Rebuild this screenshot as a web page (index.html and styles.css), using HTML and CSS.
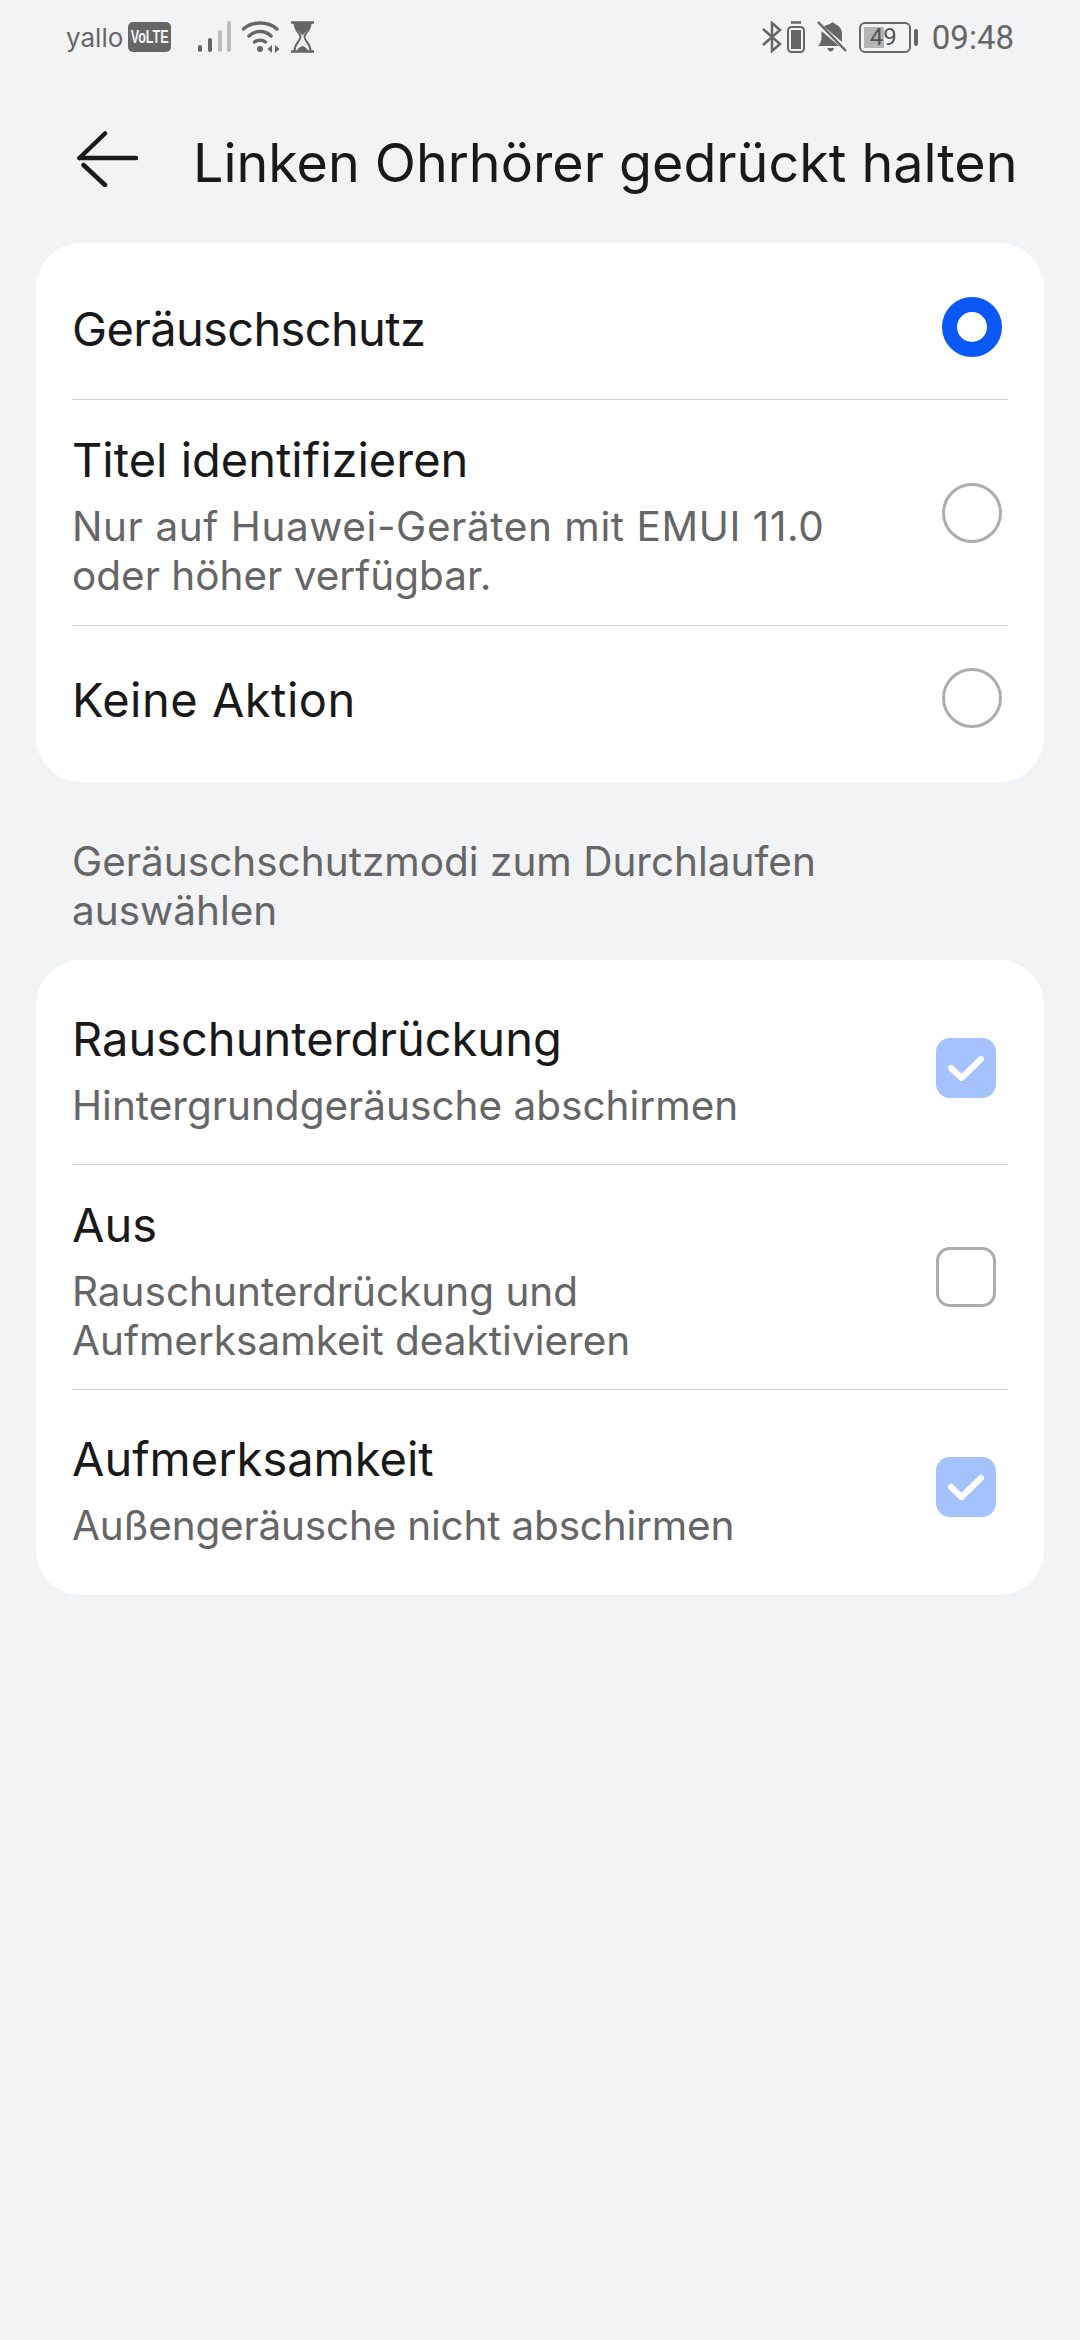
FILE: index.html
```html
<!DOCTYPE html>
<html lang="de">

<head>
    <title>Linken Ohrhörer gedrückt halten</title>
    <meta name="viewport" content="width=device-width, initial-scale=1.0">
    <link rel="stylesheet" href="styles.css">
</head>

<body>
    <div class="status-bar">
        <div class="status-left">
            <span class="carrier">yallo</span>
            <span class="volte"><span class="volte-text">VoLTE</span></span>
            <svg class="signal" width="34" height="32" viewBox="0 0 34 32">
                <rect x="0" y="24" width="4" height="7" rx="2" fill="#666"/>
                <rect x="10" y="17" width="4" height="14" rx="2" fill="#666"/>
                <rect x="20" y="9" width="4" height="22" rx="2" fill="#bbb"/>
                <rect x="29" y="0" width="4" height="31" rx="2" fill="#bbb"/>
            </svg>
            <svg class="wifi" width="38" height="32" viewBox="0 0 38 32" fill="none" stroke="#666" stroke-width="3.500" stroke-linecap="round">
                <path d="M1.500 8 C10 0 26 0 35 8"/>
                <path d="M7 15 C13 9 23 9 29 15"/>
                <path d="M12.500 21 C15.500 18.500 20.500 18.500 23.500 21"/>
                <circle cx="18" cy="28" r="3" fill="#666" stroke="none"/>
                <path d="M30 24 L25.500 28 L30 32 Z M33 24 L37.500 28 L33 32 Z" fill="#666" stroke="none"/>
            </svg>
            <svg class="hourglass" width="23" height="32" viewBox="0 0 23 32" fill="none" stroke="#666" stroke-width="2">
                <path d="M0 1.500 H23 M0 30.500 H23" stroke-width="2.500"/>
                <path d="M3.500 2 C3.500 10 9.500 12 9.500 16 C9.500 20 3.500 22 3.500 30 M19.500 2 C19.500 10 13.500 12 13.500 16 C13.500 20 19.500 22 19.500 30"/>
                <path d="M4 2 H19 C18.500 9 14 11 11.500 14.500 C9 11 4.500 9 4 2 Z M6 30 C7 27 9 26 11.500 25 C14 26 16 27 17 30 Z" fill="#666" stroke="none"/>
            </svg>
        </div>
        <div class="status-right">
            <svg class="bluetooth" width="20" height="32" viewBox="0 0 20 32" fill="none" stroke="#666" stroke-width="2.500">
                <path d="M1 8 L18 23 L10 30 V2 L18 9 L1 24"/>
            </svg>
            <svg class="watch" width="18" height="32" viewBox="0 0 18 32" fill="none" stroke="#666" stroke-width="2">
                <path d="M4 1.500 H14" stroke-width="2.500"/>
                <rect x="1" y="6" width="16" height="25" rx="3.500"/>
                <rect x="4" y="9" width="10" height="19" fill="#666" stroke="none"/>
            </svg>
            <svg class="bell" width="30" height="32" viewBox="0 0 30 32">
                <path d="M13 3 C14 1 17 1 18 3 C22 4.500 25 8 25 13 V21 L7 5.500 C8.500 4.500 11 3.500 13 3 Z M4.500 10 L22 25 H1 C3.500 22 4.500 20 4.500 16 Z" fill="#666"/>
                <path d="M10.500 27 H17 C16.500 31.500 11 31.500 10.500 27 Z" fill="#666"/>
                <path d="M1 1 L29 30" stroke="#666" stroke-width="2.500"/>
            </svg>
            <div class="battery">
                <div class="battery-body">
                    <div class="battery-fill"></div>
                    <span class="battery-num">49</span>
                </div>
                <div class="battery-cap"></div>
            </div>
            <span class="clock">09:48</span>
        </div>
    </div>

    <div class="header">
        <svg class="back" width="62" height="56" viewBox="0 0 62 56" fill="none" stroke="#1a1a1a" stroke-width="4.500" stroke-linecap="round" stroke-linejoin="round">
            <path d="M2.500 27 H59"/>
            <path d="M28 2.500 L2.500 27"/>
            <path d="M6.500 34 L28 54"/>
        </svg>
        <h1>Linken Ohrhörer gedrückt halten</h1>
    </div>

    <div class="card">
        <div class="row row-single">
            <div class="row-text">
                <div class="row-title title-tight">Geräuschschutz</div>
            </div>
            <span class="radio radio-on"></span>
        </div>
        <div class="row row-double">
            <div class="row-text">
                <div class="row-title">Titel identifizieren</div>
                <div class="row-sub"><span class="sub-wide">Nur auf Huawei-Geräten mit EMUI 11.0</span><br>oder höher verfügbar.</div>
            </div>
            <span class="radio"></span>
        </div>
        <div class="row row-single row-last">
            <div class="row-text">
                <div class="row-title title-wide">Keine Aktion</div>
            </div>
            <span class="radio"></span>
        </div>
    </div>

    <p class="section-label">Geräuschschutzmodi zum Durchlaufen<br>auswählen</p>

    <div class="card">
        <div class="row row-sub-one">
            <div class="row-text">
                <div class="row-title">Rauschunterdrückung</div>
                <div class="row-sub">Hintergrundgeräusche abschirmen</div>
            </div>
            <span class="check check-on">
                <svg width="60" height="60" viewBox="0 0 60 60" fill="none" stroke="#fff" stroke-width="6" stroke-linecap="round" stroke-linejoin="round">
                    <path d="M15 30 L25.500 40 L45 21"/>
                </svg>
            </span>
        </div>
        <div class="row row-double row-mid">
            <div class="row-text">
                <div class="row-title">Aus</div>
                <div class="row-sub">Rauschunterdrückung und<br>Aufmerksamkeit deaktivieren</div>
            </div>
            <span class="check"></span>
        </div>
        <div class="row row-sub-one">
            <div class="row-text text-low">
                <div class="row-title">Aufmerksamkeit</div>
                <div class="row-sub sub-tight">Außengeräusche nicht abschirmen</div>
            </div>
            <span class="check check-on">
                <svg width="60" height="60" viewBox="0 0 60 60" fill="none" stroke="#fff" stroke-width="6" stroke-linecap="round" stroke-linejoin="round">
                    <path d="M15 30 L25.500 40 L45 21"/>
                </svg>
            </span>
        </div>
    </div>
</body>

</html>
```

FILE: styles.css
```css
* {
    box-sizing: border-box;
}

body {
    margin: 0;
    height: 2340px;
    overflow: hidden;
    background-color: #f1f3f5;
    font-family: Inter, "Noto Sans", Arial, sans-serif;
    color: #191919;
}

.status-bar {
    height: 74px;
    padding: 0 66px;
    display: flex;
    justify-content: space-between;
    align-items: center;
    color: #666;
}

.status-left,
.status-right {
    display: flex;
    align-items: center;
}

.carrier {
    width: 62px;
    font-size: 26px;
}

.volte {
    width: 43px;
    height: 30px;
    margin-right: 27px;
    display: flex;
    align-items: center;
    justify-content: center;
    background-color: #666;
    color: #f1f3f5;
    font-family: "Liberation Sans", Arial, sans-serif;
    font-size: 19px;
    font-weight: 700;
    border-radius: 5px;
    white-space: nowrap;
}

.volte-text {
    flex-shrink: 0;
    transform: scaleX(0.66);
}

.signal {
    margin-right: 10px;
}

.wifi {
    margin-right: 11px;
}

.bluetooth {
    margin-right: 5px;
}

.watch {
    margin-right: 12px;
}

.bell {
    margin-right: 12px;
}

.battery {
    display: flex;
    align-items: center;
    margin-right: 14px;
}

.battery-body {
    position: relative;
    width: 52px;
    height: 31px;
    border: 2.500px solid #666;
    border-radius: 6px;
}

.battery-fill {
    position: absolute;
    left: 3px;
    top: 3px;
    bottom: 3px;
    width: 20px;
    background-color: #b5b5b5;
}

.battery-num {
    position: absolute;
    left: 9px;
    top: 0;
    font-family: Roboto, sans-serif;
    font-size: 24px;
    line-height: 26px;
    color: #555;
}

.battery-cap {
    width: 4px;
    height: 17px;
    margin-left: 3px;
    background-color: #666;
    border-radius: 2px;
}

.clock {
    font-family: Roboto, sans-serif;
    font-size: 33px;
}

.header {
    height: 169px;
    padding: 8px 0 0 77px;
    display: flex;
    align-items: center;
}

.back {
    margin-right: 54px;
    margin-top: -7px;
}

h1 {
    margin: 0;
    font-size: 53.800px;
    font-weight: 400;
    white-space: nowrap;
}

.card {
    margin: 0 36px;
    padding: 12px 36px;
    background-color: #fff;
    border-radius: 45px;
}

.row {
    display: flex;
    align-items: center;
    justify-content: space-between;
    border-bottom: 1.500px solid #d2d2d2;
}

.row:last-child {
    border-bottom: none;
}

.row-single {
    height: 145px;
}

.row-last {
    height: 144px;
}

.row-double {
    height: 226px;
}

.row-mid {
    height: 225px;
}

.row-sub-one {
    height: 193px;
}

.row-text {
    padding-top: 4px;
}

.row-double .row-text,
.row-text.text-low {
    padding-top: 7px;
}

.row-title {
    font-size: 47px;
    line-height: 56px;
}

.title-tight {
    letter-spacing: -0.650px;
}

.title-wide {
    letter-spacing: 0.500px;
}

.row-sub {
    font-size: 40.500px;
    line-height: 49px;
    color: #666;
    margin-top: 14px;
}

.sub-wide {
    letter-spacing: 0.580px;
}

.sub-tight {
    letter-spacing: -0.200px;
}

.radio {
    width: 60px;
    height: 60px;
    margin-right: 6px;
    border: 3px solid #adadad;
    border-radius: 50%;
}

.radio-on {
    border: 15px solid #0a59f7;
}

.check {
    width: 60px;
    height: 60px;
    margin-right: 12px;
    border: 3px solid #adadad;
    border-radius: 14px;
}

.check-on {
    border: none;
    background-color: #a4c2fb;
}

.check svg {
    display: block;
}

.section-label {
    margin: 0;
    padding: 55px 72px 25px;
    font-size: 40.500px;
    line-height: 49px;
    color: #666;
}
```
